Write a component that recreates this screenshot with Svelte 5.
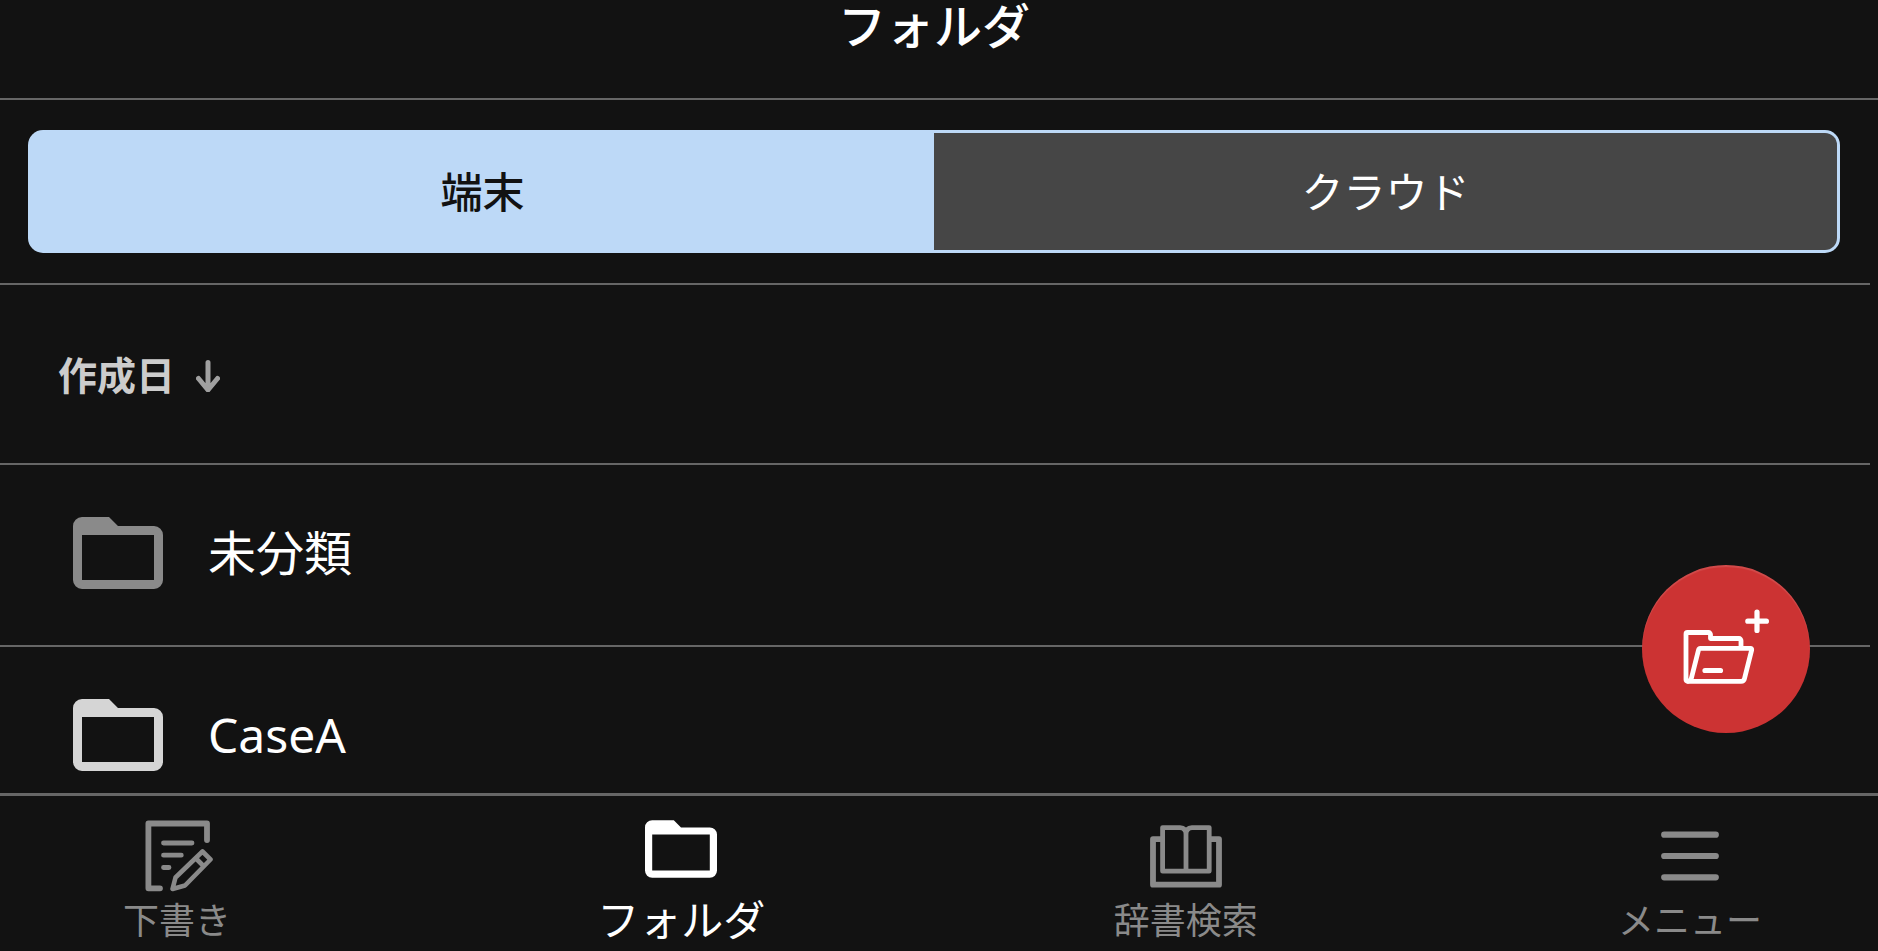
<script>
  let tab = $state('device');

  const tabs = [
    { id: 'device', label: '端末' },
    { id: 'cloud', label: 'クラウド' }
  ];

  const folders = [
    { name: '未分類', tone: 'muted' },
    { name: 'CaseA', tone: 'bright' }
  ];

  const nav = [
    { id: 'drafts', label: '下書き' },
    { id: 'folders', label: 'フォルダ' },
    { id: 'dictionary', label: '辞書検索' },
    { id: 'menu', label: 'メニュー' }
  ];
</script>

{#snippet folderIcon()}
  <svg class="folder" viewBox="0 0 10 8" aria-hidden="true">
    <path
      fill="currentColor"
      fill-rule="evenodd"
      d="M1 0h3l1 1h4a1 1 0 0 1 1 1v5a1 1 0 0 1-1 1H1a1 1 0 0 1-1-1V1a1 1 0 0 1 1-1zM1 2v5h8V2z"
    />
  </svg>
{/snippet}

<div class="app">
  <header><h1>フォルダ</h1></header>

  <main>
    <section class="switcher">
      <div class="tabs" role="tablist">
        {#each tabs as t}
          <button
            role="tab"
            aria-selected={tab === t.id}
            class:selected={tab === t.id}
            onclick={() => (tab = t.id)}>{t.label}</button>
        {/each}
      </div>
    </section>

    <div class="sort">
      <button>
        作成日
        <svg viewBox="0 0 24 33" width="24" height="33" aria-hidden="true">
          <path d="M12 3.500V30M2.500 19.500L12 31l9.500-11.500" />
        </svg>
      </button>
    </div>

    <ul>
      {#each folders as f}
        <li>
          <a href="#folder" class={f.tone}>
            {@render folderIcon()}
            <span>{f.name}</span>
          </a>
        </li>
      {/each}
    </ul>
  </main>

  <button class="fab" aria-label="フォルダを追加">
    <svg viewBox="0 0 168 168" aria-hidden="true">
      <g fill="none" stroke="#fff" stroke-width="4.800" stroke-linecap="round" stroke-linejoin="round">
        <path d="M46 116.300H45.500a1.500 1.500 0 0 1-1.500-1.500V69a1.500 1.500 0 0 1 1.500-1.500h21a2 2 0 0 1 2 2v4h28.500a2 2 0 0 1 2 2v7" />
        <path d="M58.500 83.300H108.500a1.200 1.200 0 0 1 1.200 1.500L102.500 113.500a3.500 3.500 0 0 1-3.500 2.800H46q2.800-.5 3.500-3.500L56.500 85a2.200 2.200 0 0 1 2-1.700z" />
      </g>
      <g fill="none" stroke="#fff" stroke-width="5.200" stroke-linecap="round">
        <path d="M63 105.500H78.500M115 47V65.500M105.800 56.200H124.400" />
      </g>
    </svg>
  </button>

  <nav>
    {#each nav as n}
      <a href="#{n.id}" class:active={n.id === 'folders'}>
        <span class="icon">
          {#if n.id === 'folders'}
            {@render folderIcon()}
          {:else}
            <svg viewBox="0 0 72 72" width="72" height="72" aria-hidden="true">
              {#if n.id === 'drafts'}
                <g fill="none" stroke="currentColor" stroke-linecap="round" stroke-linejoin="round">
                  <path stroke-width="5.800" d="M19 68.300H7.400V3.500H66V20" />
                  <path stroke-width="4.800" d="M22.500 23H51M22.500 35.200H40.300M22.500 47.500H28" />
                  <path stroke-width="4.600" d="M31.500 69L34.500 57.500 61.500 31.500 69.500 39.500 44 65.500zM55 38.500L62.500 46" />
                </g>
              {:else if n.id === 'dictionary'}
                <g fill="none" stroke="currentColor" stroke-linejoin="round">
                  <path stroke-width="5.800" d="M13 19.200H3V64.700H69V19.200H59" />
                  <path stroke-width="4.800" d="M36 51.200H12.600V7.600H30Q36 8 36 14Q36 8 42 7.600H59.200V51.200H36V12" />
                </g>
              {:else}
                <path
                  fill="none"
                  stroke="currentColor"
                  stroke-width="6.200"
                  stroke-linecap="round"
                  d="M10.200 14.700H61.800M10.200 36H61.800M10.200 57.300H61.800"
                />
              {/if}
            </svg>
          {/if}
        </span>
        <span class="label">{n.label}</span>
      </a>
    {/each}
  </nav>
</div>

<style>
  :global(body) {
    margin: 0;
    background: #121212;
  }

  .app {
    position: relative;
    display: flex;
    flex-direction: column;
    height: 100vh;
    overflow: hidden;
    background: #121212;
    color: #fff;
    font-family: 'Noto Sans', 'Noto Sans CJK JP', sans-serif;
  }

  button {
    padding: 0;
    border: 0;
    background: none;
    color: inherit;
    font: inherit;
    cursor: pointer;
  }

  a {
    color: inherit;
    text-decoration: none;
  }

  header {
    flex: none;
    padding: 0 10px 46px 0;
    border-bottom: 2px solid #666;
  }

  h1 {
    margin: 0;
    font-size: 48px;
    line-height: 52px;
    font-weight: 500;
    text-align: center;
  }

  main {
    flex: 1;
    min-height: 0;
    margin-right: 8px;
    overflow: hidden;
  }

  .switcher {
    padding: 30px 30px 30px 28px;
    border-bottom: 2px solid #666;
  }

  .tabs {
    display: grid;
    grid-template-columns: 1fr 1fr;
    padding: 3px;
    border-radius: 15px;
    background: #bdd9f7;
  }

  .tabs button {
    height: 117px;
    background: #464646;
    font-size: 42px;
    line-height: 60px;
    font-weight: 400;
  }

  .tabs button:first-child {
    border-radius: 12px 0 0 12px;
  }

  .tabs button:last-child {
    border-radius: 0 12px 12px 0;
  }

  .tabs .selected {
    background: #bdd9f7;
    color: #121212;
    font-weight: 500;
  }

  .sort {
    display: flex;
    height: 176px;
    padding: 0 0 2px 58px;
    border-bottom: 2px solid #666;
  }

  .sort button {
    display: flex;
    align-items: center;
    gap: 21px;
    color: #ccc;
    font-size: 39px;
    font-weight: 700;
  }

  .sort svg {
    margin-top: 4px;
  }

  .sort path {
    fill: none;
    stroke: #a0a0a0;
    stroke-width: 5;
    stroke-linecap: round;
    stroke-linejoin: round;
  }

  ul {
    margin: 0;
    padding: 0;
    list-style: none;
  }

  li {
    padding-bottom: 4px;
    border-bottom: 2px solid #666;
  }

  li a {
    display: flex;
    align-items: center;
    gap: 45px;
    height: 176px;
    padding-left: 73px;
    font-size: 48px;
    line-height: 72px;
  }

  .folder {
    flex: none;
    width: 90px;
    height: 72px;
  }

  .muted .folder {
    color: #8a8a8a;
  }

  .bright .folder {
    color: #d5d5d5;
  }

  .fab {
    position: absolute;
    right: 68px;
    bottom: 218px;
    width: 168px;
    height: 168px;
    border-radius: 50%;
    background: #cc3333;
    box-shadow: inset 0 2px 1px rgb(255 255 255 / 12%);
  }

  .fab svg {
    display: block;
    width: 100%;
    height: 100%;
  }

  nav {
    flex: none;
    display: flex;
    justify-content: space-between;
    height: 155px;
    padding: 0 106px 0 95px;
    border-top: 3px solid #666;
    color: #8a8a8a;
  }

  nav a {
    display: flex;
    flex-direction: column;
    align-items: center;
    width: 164px;
    padding-top: 24px;
    font-size: 36px;
    line-height: 58px;
    white-space: nowrap;
  }

  nav .icon {
    display: flex;
    height: 72px;
  }

  nav .folder {
    width: 72px;
    height: 58px;
  }

  nav .active {
    color: #fff;
    font-size: 42px;
    line-height: 56px;
  }
</style>
